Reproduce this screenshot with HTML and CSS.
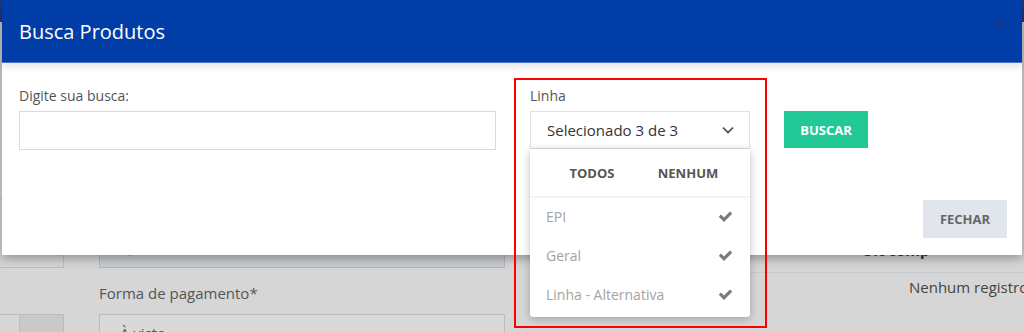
FILE: index.html
```html
<!DOCTYPE html>
<html lang="pt-BR">
<head>
    <meta charset="UTF-8">
    <meta name="viewport" content="width=device-width, initial-scale=1.0">
    <title>Busca Produtos</title>
    <link rel="stylesheet" href="styles.css">
</head>
<body>
    <div class="page">
        <div class="top-bar"></div>
        <div class="page-row row-a">
            <div class="side-btn"></div>
            <div class="field-col">
                <div class="field disabled">0,00</div>
            </div>
            <div class="right-col info-line">
                <span class="info-title">Ult comp</span>
            </div>
        </div>
        <div class="page-row row-b">
            <div class="side-spacer"></div>
            <div class="field-col">
                <label class="page-label">Forma de pagamento*</label>
            </div>
            <div class="right-col">
                <span class="empty-msg">Nenhum registro</span>
            </div>
        </div>
        <div class="page-row row-c">
            <div class="side-btn split">
                <span class="arrow-cell">
                    <svg width="14" height="10" viewBox="0 0 14 10"><path d="M0 4h9V0l5 5-5 5V6H0z" fill="#555"/></svg>
                </span>
            </div>
            <div class="field-col">
                <div class="field">À vista</div>
            </div>
        </div>
    </div>

    <div class="modal">
        <div class="modal-header">
            <h4 class="modal-title">Busca Produtos</h4>
            <span class="modal-close">&times;</span>
        </div>
        <div class="modal-body">
            <div class="search-row">
                <div class="form-group search-group">
                    <label>Digite sua busca:</label>
                    <input type="text" class="form-control">
                </div>
                <div class="form-group line-group">
                    <label>Linha</label>
                    <div class="multi-select">
                        <span>Selecionado 3 de 3</span>
                        <svg width="12" height="8" viewBox="0 0 12 8"><polyline points="1,1.5 6,6.5 11,1.5" fill="none" stroke="#444" stroke-width="1.6"/></svg>
                    </div>
                    <div class="dropdown-menu">
                        <div class="dropdown-actions">
                            <span>TODOS</span>
                            <span>NENHUM</span>
                        </div>
                        <ul class="dropdown-list">
                            <li><span>EPI</span><svg class="check" width="17" height="15" viewBox="0 0 1792 1792"><path d="M1671 566q0 40-28 68l-724 724-136 136q-28 28-68 28t-68-28l-136-136-362-362q-28-28-28-68t28-68l136-136q28-28 68-28t68 28l294 295 656-657q28-28 68-28t68 28l136 136q28 28 28 68z"/></svg></li>
                            <li><span>Geral</span><svg class="check" width="17" height="15" viewBox="0 0 1792 1792"><path d="M1671 566q0 40-28 68l-724 724-136 136q-28 28-68 28t-68-28l-136-136-362-362q-28-28-28-68t28-68l136-136q28-28 68-28t68 28l294 295 656-657q28-28 68-28t68 28l136 136q28 28 28 68z"/></svg></li>
                            <li><span>Linha - Alternativa</span><svg class="check" width="17" height="15" viewBox="0 0 1792 1792"><path d="M1671 566q0 40-28 68l-724 724-136 136q-28 28-68 28t-68-28l-136-136-362-362q-28-28-28-68t28-68l136-136q28-28 68-28t68 28l294 295 656-657q28-28 68-28t68 28l136 136q28 28 28 68z"/></svg></li>
                        </ul>
                    </div>
                </div>
                <button class="btn btn-search">BUSCAR</button>
            </div>
            <div class="modal-footer">
                <button class="btn btn-close">FECHAR</button>
            </div>
        </div>
    </div>

    <div class="highlight"></div>
</body>
</html>
```

FILE: styles.css
```css
body {
    margin: 0;
    font-family: "Open Sans", "Noto Sans", sans-serif;
    background-color: #d6d6d6;
    color: #555;
    overflow: hidden;
}
.page {
    height: 332px;
}
.top-bar {
    height: 22px;
    background-color: #1f3d82;
}
.page-row {
    display: flex;
}
.row-a {
    margin-top: 176px;
    height: 70px;
}
.row-b {
    height: 46px;
}
.row-c {
    height: 40px;
}
.side-btn {
    width: 64px;
    flex-shrink: 0;
    box-sizing: border-box;
    border: 1px solid #bcbcbc;
    border-left: none;
}
.side-btn.split {
    display: flex;
    justify-content: flex-end;
    border-bottom: none;
}
.arrow-cell {
    width: 43px;
    background-color: #c9c9c9;
    border-left: 1px solid #bcbcbc;
    display: flex;
    justify-content: center;
    padding-top: 24px;
}
.side-spacer {
    width: 64px;
    flex-shrink: 0;
}
.field-col {
    width: 406px;
    flex-shrink: 0;
    margin-left: 35px;
}
.field {
    box-sizing: border-box;
    height: 100%;
    border: 1px solid #bdbdbd;
    background-color: #d9d9d9;
    padding: 8px 20px;
    font-size: 15px;
    color: #555;
}
.field.disabled {
    background-color: #c8cbcf;
    border-color: #b4b8bc;
    display: flex;
    align-items: flex-end;
    padding-bottom: 9px;
    color: #777;
}
.right-col {
    flex: 1;
    min-width: 0;
    margin-left: 25px;
}
.info-line {
    height: 74px;
    border-bottom: 1px solid #c4c9cd;
    display: flex;
    align-items: flex-end;
    padding-left: 332px;
}
.info-title {
    font-weight: 700;
    font-size: 15px;
    color: #333;
    margin-bottom: 12px;
}
.page-label {
    display: block;
    font-size: 15px;
    padding-top: 15px;
}
.empty-msg {
    display: block;
    white-space: nowrap;
    font-size: 15px;
    padding-left: 379px;
    padding-top: 9px;
    color: #444;
}

/* modal */
.modal {
    position: absolute;
    top: 0;
    left: 2px;
    width: 1020px;
    background-color: #fff;
    box-shadow: 0 3px 10px rgba(0, 0, 0, 0.35);
}
.modal-header {
    height: 63px;
    background-color: #003da6;
    border-bottom: 1px solid #4a74cc;
    box-sizing: border-box;
    display: flex;
    align-items: center;
    justify-content: space-between;
    padding: 0 17px;
    box-shadow: 0 3px 8px rgba(0, 0, 0, 0.12);
    position: relative;
}
.modal-title {
    margin: 0;
    font-size: 20px;
    font-weight: 400;
    color: #fff;
}
.modal-close {
    font-size: 22px;
    color: #1a3888;
    align-self: flex-start;
    margin-top: 6px;
}
.modal-body {
    padding: 23px 15px 17px 17px;
}
.search-row {
    display: flex;
    align-items: flex-start;
}
.form-group label {
    display: block;
    font-size: 14px;
    line-height: 20px;
    margin-bottom: 5px;
    color: #555;
}
.search-group {
    width: 477px;
}
.form-control {
    box-sizing: border-box;
    width: 100%;
    height: 39px;
    border: 1px solid #dadada;
    margin: 0;
}
.line-group {
    width: 220px;
    margin-left: 34px;
    position: relative;
}
.multi-select {
    box-sizing: border-box;
    height: 38px;
    border: 1px solid #dde1e5;
    display: flex;
    align-items: center;
    justify-content: space-between;
    padding: 0 15px 0 16px;
    font-size: 15px;
    color: #333;
}
.dropdown-menu {
    position: absolute;
    top: 63px;
    left: 0;
    width: 220px;
    height: 168px;
    background-color: #fff;
    box-shadow: 0 2px 8px rgba(0, 0, 0, 0.25);
    border-radius: 0 0 3px 3px;
    z-index: 2;
}
.dropdown-actions {
    height: 47px;
    display: flex;
    align-items: center;
    padding: 0 14px;
    border-bottom: 1px solid #f0f0f0;
    box-shadow: 0 1px 3px rgba(0, 0, 0, 0.04);
}
.dropdown-actions span {
    flex: 1;
    text-align: center;
    font-size: 13px;
    font-weight: 700;
    color: #555;
}
.dropdown-list {
    list-style: none;
    margin: 0;
    padding: 0;
}
.dropdown-list li {
    height: 39px;
    display: flex;
    align-items: center;
    justify-content: space-between;
    padding: 0 16px 0 16px;
    font-size: 14px;
    color: #a3a3a3;
}
.check {
    fill: #7a7a7a;
}
.btn {
    border: none;
    font-family: inherit;
    font-weight: 700;
    font-size: 13px;
    cursor: pointer;
}
.btn-search {
    margin-left: 34px;
    margin-top: 25px;
    width: 84px;
    height: 37px;
    background-color: #22c997;
    color: #fff;
}
.modal-footer {
    display: flex;
    justify-content: flex-end;
    margin-top: 50px;
}
.btn-close {
    width: 84px;
    height: 38px;
    background-color: #e1e6ed;
    color: #666;
}
.highlight {
    position: absolute;
    top: 78px;
    left: 514px;
    width: 253px;
    height: 250px;
    box-sizing: border-box;
    border: 2px solid #f00;
    z-index: 3;
}
```
